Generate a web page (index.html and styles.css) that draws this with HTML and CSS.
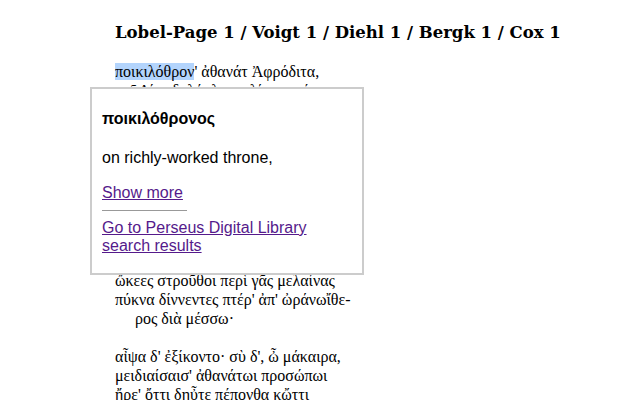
FILE: index.html
```html
<!DOCTYPE html>
<html lang="grc">
<head>
<meta charset="utf-8">
<title>Sappho 1</title>
<link rel="stylesheet" href="styles.css">
</head>
<body>
<main class="page">
  <h1 class="title">Lobel-Page 1 / Voigt 1 / Diehl 1 / Bergk 1 / Cox 1</h1>
  <div class="poem">
    <div class="line"><span class="sel">ποικιλόθρον</span>' ἀθανάτ Ἀφρόδιτα,</div>
    <div class="line">παῖ Δίος δολόπλοκε, λίσσομαί σε,</div>
    <div class="line">μή μ' ἄσαισι μηδ' ὀνίαισι δάμνα,</div>
    <div class="line indent">πότνια, θῦμον·</div>
    <div class="line blank"></div>
    <div class="line">ἀλλὰ τυίδ' ἔλθ', αἴ ποτα κἀτέρωτα</div>
    <div class="line">τὰς ἔμας αὔδας ἀίοισα πήλοι</div>
    <div class="line">ἔκλυες, πάτρος δὲ δόμον λίποισα</div>
    <div class="line indent">χρύσιον ἦλθες</div>
    <div class="line blank"></div>
    <div class="line">ἄρμ' ὐπασδεύξαισα· κάλοι δέ σ' ἆγον</div>
    <div class="line">ὤκεες στροῦθοι περὶ γᾶς μελαίνας</div>
    <div class="line">πύκνα δίννεντες πτέρ' ἀπ' ὠράνωἴθε-</div>
    <div class="line indent">ρος διὰ μέσσω·</div>
    <div class="line blank"></div>
    <div class="line">αἶψα δ' ἐξίκοντο· σὺ δ', ὦ μάκαιρα,</div>
    <div class="line">μειδιαίσαισ' ἀθανάτωι προσώπωι</div>
    <div class="line">ἤρε' ὄττι δηὖτε πέπονθα κὤττι</div>
  </div>
</main>
<div class="popup">
  <div class="pop-word">ποικιλόθρονος</div>
  <div class="pop-def">on richly-worked throne,</div>
  <a class="pop-link more" href="#">Show more</a>
  <hr class="pop-rule">
  <a class="pop-link" href="#">Go to Perseus Digital Library search results</a>
</div>
</body>
</html>
```

FILE: styles.css
```css
html, body {
  margin: 0;
  padding: 0;
  background: #ffffff;
}

body {
  font-family: "Liberation Serif", "Times New Roman", serif;
  color: #000000;
  overflow: hidden;
  height: 400px;
}

.page {
  padding-left: 115px;
}

.title {
  margin: 23px 0 0 0;
  font-family: "DejaVu Serif", Georgia, serif;
  font-size: 16.5px;
  font-weight: bold;
  line-height: normal;
  white-space: nowrap;
}

.poem {
  margin-top: 20px;
  font-size: 16px;
  line-height: 19px;
}

.line {
  white-space: nowrap;
  height: 19px;
}

.indent {
  padding-left: 20px;
}

.sel {
  background: #b3d4fc;
}

.popup {
  position: absolute;
  left: 90px;
  top: 87px;
  width: 250px;
  height: 151px;
  padding: 21px 10px 12px 10px;
  border: 2px solid #cccccc;
  background: #ffffff;
  font-family: "Liberation Sans", Arial, sans-serif;
  font-size: 16px;
  line-height: normal;
  display: flex;
  flex-direction: column;
  align-items: flex-start;
}

.pop-word {
  font-weight: bold;
}

.pop-def {
  margin-top: 21px;
}

.pop-link {
  color: #551a8b;
  text-decoration: underline;
  line-height: 18px;
}

.more {
  margin-top: 17px;
}

.pop-rule {
  width: 85px;
  margin: 8px 0 8px 0;
  border: 0;
  border-top: 1px solid #999999;
  height: 0;
}
```
